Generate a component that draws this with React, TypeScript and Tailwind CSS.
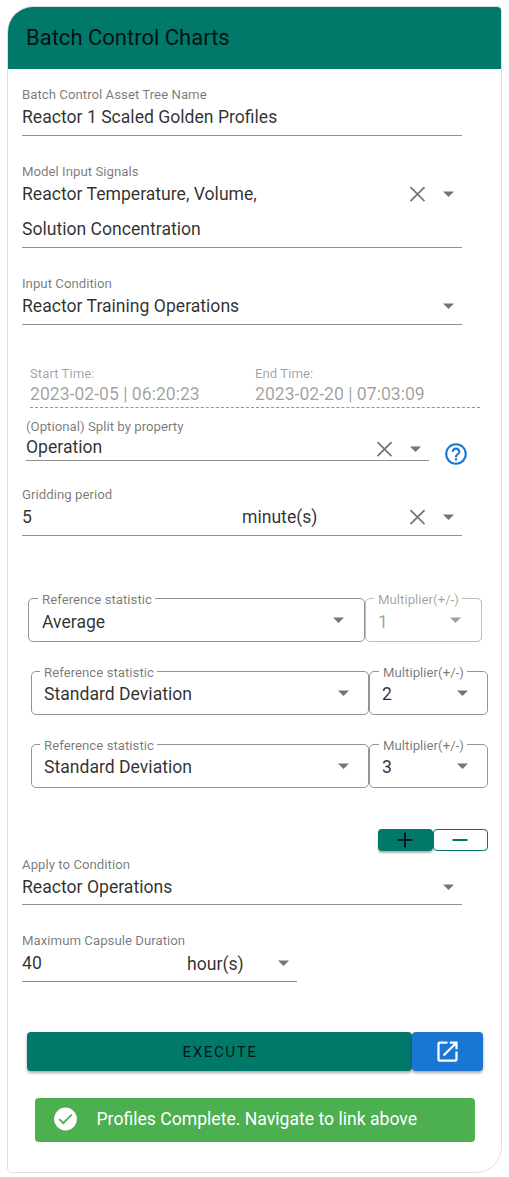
import React from "react";

const LABEL = "block whitespace-nowrap text-[13.2px] leading-5 tracking-[0.03px]";
const MUTED = "text-black/54";

function Caret({ faded = false }: { faded?: boolean }) {
  return (
    <svg width="12" height="6" viewBox="0 0 12 6" className={faded ? "shrink-0 text-[#9e9e9e]" : "shrink-0 text-[#757575]"}>
      <path d="M1 0.5h11L6.5 6z" fill="currentColor" />
    </svg>
  );
}

function Clear() {
  return (
    <svg width="16" height="16" viewBox="0 0 16 16" className="shrink-0 text-[#757575]">
      <path d="M1.5 1.2l14 14M15.5 1.2L1.5 15.2" stroke="currentColor" strokeWidth="1.8" fill="none" />
    </svg>
  );
}

function Field({
  label,
  children,
  className,
}: {
  label: string;
  children: React.ReactNode;
  className: string;
}) {
  return (
    <div className={`flex flex-col border-b border-[#8f8f8f] ${className}`}>
      <span className={`${LABEL} ${MUTED}`}>{label}</span>
      {children}
    </div>
  );
}

function Outlined({
  label,
  value,
  className,
  labelLeft = "left-[9px]",
  valuePad = "pt-px",
  arrow = "",
  disabled = false,
}: {
  label: string;
  value: string;
  className: string;
  labelLeft?: string;
  valuePad?: string;
  arrow?: string;
  disabled?: boolean;
}) {
  return (
    <div
      className={`relative flex h-11 items-center justify-between rounded-[5px] border ${
        disabled ? "border-[#bdbdbd] text-black/38" : "border-[#949494]"
      } ${className}`}
    >
      <span
        className={`absolute -top-[9px] bg-white pl-1 pr-[3px] ${labelLeft} ${LABEL} ${disabled ? "text-black/38" : MUTED}`}
      >
        {label}
      </span>
      <span className={`leading-6 ${valuePad}`}>{value}</span>
      <span className={arrow}>
        <Caret faded={disabled} />
      </span>
    </div>
  );
}

export default function App() {
  return (
    <div className="h-[1177px] w-[509px] overflow-hidden bg-white pl-[7px] pt-[6px] font-[Roboto,sans-serif] text-[17.6px] text-black/82">
      <div className="flex h-[1167px] w-[495px] flex-col overflow-hidden rounded-tl-[26px] rounded-tr-[5px] rounded-br-[26px] rounded-bl-[5px] border border-[#dfdfdf]">
        <header className="flex h-[62px] shrink-0 items-center bg-[#00796b] pb-[2px] pl-[18px] text-[22px] text-black/87">
          Batch Control Charts
        </header>

        <main className="flex flex-col items-start pl-[14px] pt-4">
          <Field label="Batch Control Asset Tree Name" className="h-[51px] w-[440px]">
            <span className="leading-6">Reactor 1 Scaled Golden Profiles</span>
          </Field>

          <Field label="Model Input Signals" className="mt-[26px] h-[86px] w-[440px]">
            <div className="flex h-6 items-center">
              <span className="flex-1">Reactor Temperature, Volume,</span>
              <Clear />
              <span className="ml-[17px] mr-2">
                <Caret />
              </span>
            </div>
            <span className="mt-[11px] leading-6">Solution Concentration</span>
          </Field>

          <Field label="Input Condition" className="mt-[26px] h-[51px] w-[440px]">
            <div className="flex h-6 items-center justify-between pr-2">
              <span>Reactor Training Operations</span>
              <Caret />
            </div>
          </Field>

          <div className="ml-2 mt-[39px] flex h-11 w-[450px] border-b border-dashed border-[#949494] text-black/38">
            <div className="w-[225px]">
              <span className={LABEL}>Start Time:</span>
              <span className="block leading-5">2023-02-05 | 06:20:23</span>
            </div>
            <div>
              <span className={LABEL}>End Time:</span>
              <span className="block leading-5">2023-02-20 | 07:03:09</span>
            </div>
          </div>

          <div className="ml-1 mt-[9px] flex">
            <Field label="(Optional) Split by property" className="h-11 w-[403px]">
              <div className="flex h-5 items-center">
                <span className="flex-1">Operation</span>
                <span className="pt-1">
                  <Clear />
                </span>
                <span className="ml-[17px] mr-2 pt-1">
                  <Caret />
                </span>
              </div>
            </Field>
            <svg width="26" height="26" viewBox="0 0 24 24" className="ml-[14px] mt-6 text-[#1976d2]">
              <path
                fill="currentColor"
                d="M11 18h2v-2h-2v2zm1-16C6.48 2 2 6.48 2 12s4.48 10 10 10 10-4.48 10-10S17.52 2 12 2zm0 18c-4.41 0-8-3.59-8-8s3.59-8 8-8 8 3.59 8 8-3.59 8-8 8zm0-14c-2.21 0-4 1.79-4 4h2c0-1.1.9-2 2-2s2 .9 2 2c0 2-3 1.75-3 5h2c0-2.25 3-2.5 3-5 0-2.21-1.79-4-4-4z"
              />
            </svg>
          </div>

          <Field label="Gridding period" className="mt-[18px] h-[51px] w-[440px]">
            <div className="flex h-6 items-center">
              <span className="w-[220px]">5</span>
              <span className="flex-1">minute(s)</span>
              <Clear />
              <span className="ml-[17px] mr-2">
                <Caret />
              </span>
            </div>
          </Field>

          <div className="ml-[6px] mt-[62px] flex">
            <Outlined label="Reference statistic" value="Average" className="w-[337px] pl-[13px] pr-[20px]" valuePad="pt-[3px]" />
            <Outlined label="Multiplier(+/-)" value="1" className="w-[117px] pl-[12px] pr-[20px]" valuePad="pt-[3px]" labelLeft="left-[8px]" disabled />
          </div>
          <div className="ml-[9px] mt-[29px] flex">
            <Outlined label="Reference statistic" value="Standard Deviation" className="w-[338px] pl-[12px] pr-[19px]" labelLeft="left-[8px]" />
            <Outlined label="Multiplier(+/-)" value="2" className="w-[119px] pl-[12px] pr-[19px]" />
          </div>
          <div className="ml-[9px] mt-[29px] flex">
            <Outlined label="Reference statistic" value="Standard Deviation" className="w-[338px] pl-[12px] pr-[19px]" labelLeft="left-[8px]" arrow="pb-px" />
            <Outlined label="Multiplier(+/-)" value="3" className="w-[119px] pl-[12px] pr-[19px]" arrow="pb-px" />
          </div>

          <div className="ml-[356px] mt-[41px] flex h-[22px]">
            <button className="flex w-[55px] items-center justify-center rounded-[4px] bg-[#00796b] pr-px shadow-[0_2px_2px_rgba(0,0,0,0.3)]">
              <svg width="16" height="16" viewBox="0 0 16 16">
                <path d="M8 0.5v15M0.5 8h15" stroke="#0b1a18" strokeWidth="2" />
              </svg>
            </button>
            <button className="flex w-[55px] items-center justify-center rounded-[4px] border border-[#00796b] pr-px">
              <svg width="16" height="16" viewBox="0 0 16 16">
                <path d="M0.5 8h15" stroke="#00796b" strokeWidth="2" />
              </svg>
            </button>
          </div>

          <Field label="Apply to Condition" className="mt-1 h-[50px] w-[440px]">
            <div className="flex h-6 items-center justify-between pr-2">
              <span>Reactor Operations</span>
              <Caret />
            </div>
          </Field>

          <Field label="Maximum Capsule Duration" className="mt-[26px] h-[51px] w-[275px]">
            <div className="flex h-6 items-center">
              <span className="w-[165px]">40</span>
              <span className="flex-1 pt-[2px]">hour(s)</span>
              <span className="mr-2">
                <Caret />
              </span>
            </div>
          </Field>

          <div className="ml-[5px] mt-[50px] flex h-[39px]">
            <button className="w-[385px] rounded-[4px] bg-[#00796b] pl-px pt-px text-[15.2px] tracking-[0.1em] shadow-[0_2px_3px_rgba(0,0,0,0.35)]">
              EXECUTE
            </button>
            <button className="flex w-[71px] items-center justify-center rounded-[4px] bg-[#1976d2] pb-px pr-px text-white shadow-[0_2px_3px_rgba(0,0,0,0.35)]">
              <svg width="27" height="27" viewBox="0 0 24 24">
                <path
                  fill="currentColor"
                  d="M14 3v2h3.59l-9.83 9.83 1.41 1.41L19 6.41V10h2V3M19 19H5V5h7V3H5c-1.11 0-2 .9-2 2v14a2 2 0 0 0 2 2h14a2 2 0 0 0 2-2v-7h-2v7z"
                />
              </svg>
            </button>
          </div>

          <div className="ml-[13px] mt-[27px] flex h-11 w-[440px] items-center rounded-[4px] bg-[#4caf50] pl-[17px] text-white">
            <svg width="26" height="26" viewBox="0 0 26 26" className="mt-[-2px] shrink-0">
              <circle cx="13.5" cy="13" r="11.4" fill="#fff" />
              <path d="M7.2 13.2l4 4L19.8 8.6" fill="none" stroke="#4caf50" strokeWidth="1.7" />
            </svg>
            <span className="ml-[18.5px] -mt-[2px]">Profiles Complete. Navigate to link above</span>
          </div>
        </main>
      </div>
    </div>
  );
}
